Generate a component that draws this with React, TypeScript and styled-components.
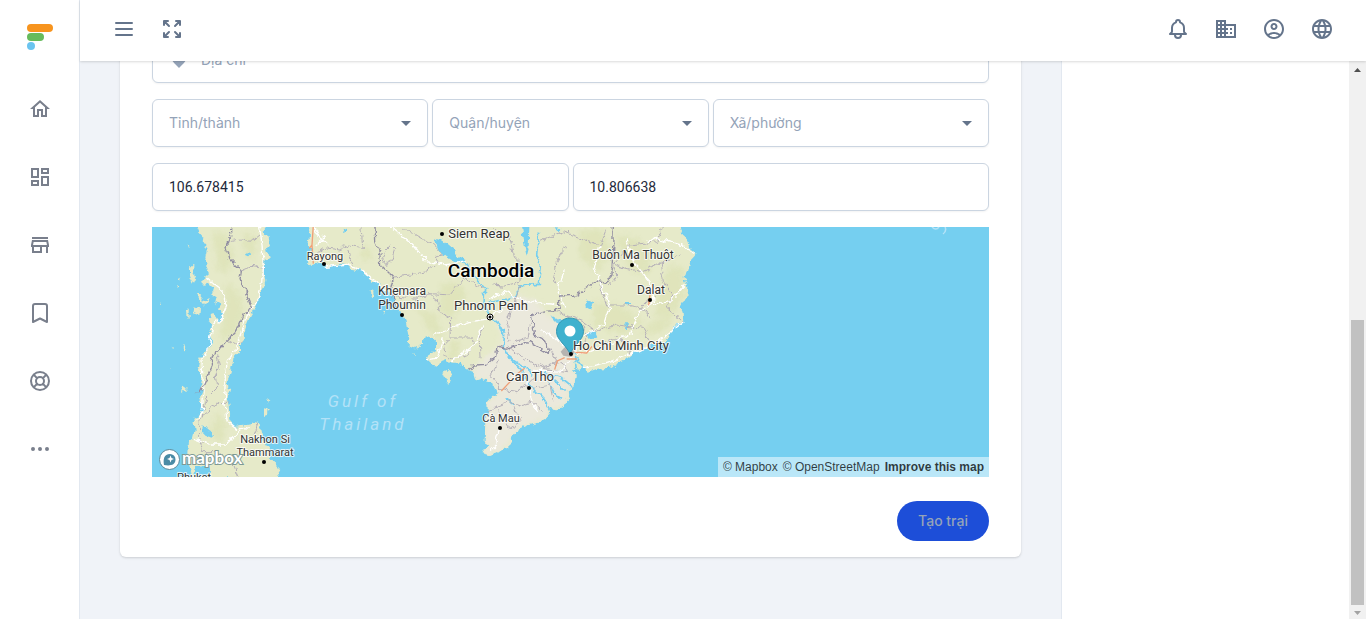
import React from "react";
import styled, { createGlobalStyle } from "styled-components";
import {
  HiOutlineArrowsExpand,
  HiOutlineBell,
  HiOutlineBookmark,
  HiOutlineDotsHorizontal,
  HiOutlineMenu,
  HiOutlineSupport,
  HiLocationMarker,
} from "react-icons/hi";
import {
  MdBusiness,
  MdLanguage,
  MdOutlineAccountCircle,
  MdOutlineDashboard,
  MdOutlineHome,
  MdOutlineStore,
} from "react-icons/md";

const GlobalStyle = createGlobalStyle`
  *, *::before, *::after { box-sizing: border-box; }
  body {
    margin: 0;
    font-family: Inter, "Noto Sans", sans-serif;
    font-size: 14px;
    color: #1e293b;
    background: #f1f5f9;
  }
  button, input, select { font: inherit; color: inherit; }
`;

const Shell = styled.div`
  display: flex;
  height: 100vh;
`;

const Sidebar = styled.aside`
  flex: none;
  width: 80px;
  background: #fff;
  border-right: 1px solid #e2e8f0;
`;

const LogoLink = styled.a`
  display: flex;
  justify-content: center;
  height: 75px;
  padding-top: 24px;
`;

const NavLink = styled.a`
  display: flex;
  align-items: center;
  justify-content: center;
  height: 68px;
  color: #797f8c;
  font-size: 24px;
`;

const Workspace = styled.div`
  flex: 1;
  min-width: 0;
  display: flex;
  flex-direction: column;
`;

const Header = styled.header`
  flex: none;
  z-index: 1;
  display: flex;
  justify-content: space-between;
  height: 61px;
  padding: 9px 24px;
  background: #fff;
  box-shadow: 0 1px 3px rgba(0, 0, 0, 0.1), 0 1px 2px rgba(0, 0, 0, 0.06);
`;

const ButtonGroup = styled.div`
  display: flex;
  gap: 8px;
`;

const IconButton = styled.button`
  display: flex;
  align-items: center;
  justify-content: center;
  width: 40px;
  height: 40px;
  padding: 0;
  border: 0;
  border-radius: 50%;
  background: none;
  color: #64748b;
  font-size: 24px;
`;

const Body = styled.div`
  flex: 1;
  min-height: 0;
  display: flex;
`;

/* Reversed column so that the view opens at the end of the form. */
const Content = styled.main`
  flex: 1;
  min-width: 0;
  display: flex;
  flex-direction: column-reverse;
  overflow-y: auto;
  scrollbar-width: none;
  padding: 0 40px;
  background: #f0f3f8;
`;

const Card = styled.form`
  flex: none;
  display: flex;
  flex-direction: column;
  gap: 16px;
  margin-bottom: 62px;
  padding: 32px 32px 16px;
  border-radius: 6px;
  background: #fff;
  box-shadow: 0 1px 3px rgba(0, 0, 0, 0.1), 0 1px 2px rgba(0, 0, 0, 0.06);
`;

const FieldRow = styled.div`
  display: flex;
  gap: 4px;
`;

const Field = styled.label`
  flex: 1 1 0;
  min-width: 0;
  display: flex;
  align-items: center;
  gap: 12px;
  height: 48px;
  padding: 0 16px;
  border: 1px solid #cbd5e1;
  border-radius: 6px;
  background: #fff;
  color: #94a3b8;
  box-shadow: 0 1px 2px rgba(0, 0, 0, 0.05);
`;

const TextInput = styled.input<{ $numeric?: boolean }>`
  flex: 1;
  min-width: 0;
  height: 18px;
  padding: 0;
  border: 0;
  outline: 0;
  background: none;
  color: #1e293b;
  font-family: ${(p) => (p.$numeric ? "Roboto" : "Inter")}, sans-serif;
  &::placeholder { color: #94a3b8; opacity: 1; }
`;

const SelectInput = styled.select`
  flex: 1;
  min-width: 0;
  padding: 0 0 2px;
  border: 0;
  outline: 0;
  appearance: none;
  background: none;
  color: #94a3b8;
`;

const MapFrame = styled.div`
  position: relative;
  height: 250px;
  overflow: hidden;
  background: #75cff0;
`;

const MapDrawing = styled.svg`
  display: block;
  width: 100%;
  height: 100%;
`;

const Attribution = styled.div`
  position: absolute;
  right: 0;
  bottom: 0;
  display: flex;
  gap: 5px;
  padding: 0 5px;
  background: rgba(255, 255, 255, 0.5);
  font: 12px/20px "Liberation Sans", Arial, sans-serif;
`;

const AttributionLink = styled.a<{ $strong?: boolean }>`
  color: rgba(0, 0, 0, 0.75);
  font-weight: ${(p) => (p.$strong ? 700 : 400)};
  text-decoration: none;
`;

const Actions = styled.div`
  display: flex;
  justify-content: flex-end;
  padding-top: 8px;
`;

const SubmitButton = styled.button`
  min-width: 92px;
  height: 40px;
  padding: 0 20px 2px;
  border: 0;
  border-radius: 20px;
  background: #1d4ed8;
  color: #94a3b8;
  font-weight: 500;
`;

const SidePanel = styled.aside`
  flex: none;
  width: 288px;
  border-left: 1px solid #e2e8f0;
  background: #fff;
`;

const ScrollTrack = styled.div`
  flex: none;
  display: flex;
  flex-direction: column;
  align-items: center;
  width: 17px;
  padding: 7px 0 4px;
  background: #f1f1f1;
`;

const ScrollThumb = styled.div`
  width: 13px;
  height: 285px;
  margin: auto 0 6px;
  background: #c1c1c1;
`;

const Logo = () => (
  <svg width="26" height="26" viewBox="0 0 26 26" aria-hidden="true">
    <rect width="26" height="8" rx="4" fill="#f7941e" />
    <rect y="9" width="17" height="8" rx="4" fill="#66bb5c" />
    <circle cx="4" cy="22" r="4" fill="#6bc4f0" />
  </svg>
);

const Caret = () => (
  <svg width="10" height="5" viewBox="0 0 10 5" aria-hidden="true">
    <path d="M0 0h10L5 5z" fill="#64748b" />
  </svg>
);

const ScrollArrow = ({ up }: { up?: boolean }) => (
  <svg width="7" height="4" viewBox="0 0 7 4" aria-hidden="true">
    <path d={up ? "M0 4 3.5 0 7 4z" : "M0 0 3.5 4 7 0z"} fill={up ? "#505050" : "#a3a3a3"} />
  </svg>
);

const PENINSULA =
  "M140 0L150 25 160 36 158 55 170 72 166 95 172 112 172 130 180 145 165 158 150 170 160 182 178 178 190 190 186 205 200 214 196 230 214 240 204 256 218 270 206 288 190 264 180 268 177 285 186 300 180 325 187 345 178 372 160 382 162 396 144 398 150 412 146 430 156 448 150 480 158 500 150 520 160 550 146 570 130 582 134 615 128 640 114 650 112 690 116 715 128 760 L390 760 384 730 374 712 360 702 362 680 346 660 338 640 332 618 330 592 310 588 298 598 276 602 250 606 238 580 236 540 230 520 238 490 236 465 246 440 240 425 248 420 250 400 270 380 270 365 280 355 282 325 290 300 302 270 318 245 328 215 342 190 346 165 340 140 344 105 356 98 348 70 360 50 355 36 338 24 346 0Z";

const MAINLAND =
  "M472 0L480 30 474 60 484 74 478 95 468 112 478 124 496 116 520 124 548 122 570 114 592 118 600 132 622 136 632 130 642 146 660 158 664 170 688 178 700 196 722 200 730 220 738 242 750 262 768 280 772 300 778 330 776 365 796 370 818 360 820 338 842 332 858 350 858 376 838 388 830 404 842 416 862 424 872 408 888 402 902 416 930 416 950 434 970 440 978 466 1000 462 1020 470 1034 480 1046 504 1024 516 1012 530 1014 560 1006 590 1004 650 1018 658 1004 672 996 684 1020 690 1044 680 1052 674 1072 664 1086 652 1082 640 1104 616 1130 602 1162 594 1184 582 1200 564 1196 552 1216 556 1240 548 1246 528 1258 516 1256 496 1270 488 1274 450 1266 432 1290 434 1304 428 1316 440 1340 432 1380 428 1408 412 1432 400 1452 384 1478 372 1510 360 1550 350 1560 330 1576 304 1600 290 1598 262 1592 248 1608 220 1612 190 1604 160 1612 130 1618 110 1640 86 1620 70 1614 40 1596 24 1590 0Z";

const DELTA =
  "M965 436L1000 400 1040 372 1060 330 1030 280 1060 240 1110 210 1160 230 1190 270 1240 300 1270 350 1275 400 1268 432 1274 450 1270 488 1256 496 1258 516 1246 528 1240 548 1196 552 1200 564 1184 582 1130 602 1104 616 1082 640 1086 652 1044 680 1020 690 996 684 1018 658 1004 650 1006 590 1014 560 1012 530 1046 504 1034 480 1000 462 978 466Z";

const HILLS = [
  "M190 20l40 10 20 60-20 60-30-20zM230 170l40 40 10 60-30 60-40 20 10-80zM280 20l40 20-10 70-30-40zM200 560l30 40-20 60-30-40z",
  "M640 60l24 20-8 30-24-14zM870 180l50-10 30 40-40 70-40-20zM800 250l60 20 20 80-40-30zM900 350l30 0-6 50-30 0zM1290 20l60-10 40 70-50 60-50-40z",
  "M1560 120l40 10 4 80-40 60-50 10 10-70zM1400 30l60 10 50 50-20 60-40-10-40-50zM1330 230l80 10 70 50-60 40-90-30zM1460 330l50-40 60-20-30 50z",
];

const WATER = [
  "M852 40L880 48 918 80 930 100 946 104 940 118 916 112 890 96 866 76Z",
  "M158 604l12 4 16 14 6 14-18-4-18-8zM286 88l12-10 2 16zM1116 6l22 2-2 60 -6 24-6-30zM1310 226l20 8-10 18-14-8zM1204 276l30 10 20 26-20-4zM1308 324l26-8 8 18-22 6zM1420 234h20v10h-14zM1424 298h10v14h-8zM1210 6l24 2-6 12z",
  "M574 12l14-4 2 12-12 4zM840 345l16 10 2 24-16 6-6-20zM138 722l40-2 4 36-50 0z",
];

const RIVERS =
  "M946 112L970 150 1004 190 1002 240 1030 285 1048 300 1064 330 1060 366M1166 20L1160 90 1174 120 1168 178 1110 182 1096 214 1074 222 1016 232M1060 366L1080 400 1110 430 1140 480 1180 520 1204 556M1064 380L1096 408 1130 430 1146 448M1070 520l20 16M1180 440L1220 470 1250 500M1206 452l30 10 30 24M1196 470L1214 508 1236 520M1272 380l8 60M1280 400l26 34";

const ISLANDS =
  "M120 124h10v20l8 10-10 22-8-20zM108 254l8 0 0 26-6 6zM134 244l16 6-2 20-18-6zM96 362l8-2 4 14-6 2zM98 490l12-4-2 10-12 8zM348 522l10 8-4 6zM342 552l14 4-2 14-12 4zM662 196l10 4 2 14-8 6zM696 262l8-4 0 8zM880 440l16-8 10 16-8 36-10-24-12-8zM786 386l10 6 2 6-6-4zM86 160l6 2-2 10zM80 180l10 4-4 4zM110 54l8 6-4 6zM140 206l12 2 10 12-8 6zM150 226l14 6 14-10 2 12-18 8zM760 300v16M1248 670l5 0 0 4zM30 230h3v3h-3zM62 428h3v3h-3zM64 366l10-2 0 4z";

const MINOR_BORDERS =
  "M238 50L280 44 310 46 330 30M276 134L300 124 345 130M236 350L250 358 280 354M200 388L208 420 196 450 200 490 170 520 162 550M236 532L200 532 180 544 178 560 150 580 148 640 160 660 154 680 200 680 250 720 264 756M316 590l4 20-8 20M500 86L530 66 570 72 600 60 640 70 632 6M594 72L600 104 610 120M704 80l20-22 10 10-8 40-20 10-8-20zM732 156L780 150 830 140 856 120 860 96 880 90 850 60 760 10M730 212L800 220 840 206 866 230 870 260 902 280 900 340 880 360 884 380M880 390l30 10 40-10 20-30-4-24-60 0M840 206L900 210 940 160 1000 190M1000 310L988 340 990 400M1030 180L1060 184 1110 170 1110 110 1090 90 1080 40 1030 10M1170 50L1240 20 1350 60 1370 10M1220 178L1210 130 1250 60M1380 180L1400 150 1390 120 1440 60 1520 50 1540 6M1350 180L1370 240 1430 240 1480 250 1500 280M1390 120L1470 140 1540 110 1590 90M1530 110L1540 170 1570 210 1550 250 1600 290M1470 250L1530 200M1220 260L1250 270 1300 290 1310 340 1290 370M1300 290L1340 320 1400 300 1480 310 1500 350M1340 370L1390 340 1430 350 1440 390M1110 180L1070 300 1080 350M1140 290L1130 340 1090 350M1080 370L1120 400 1180 430 1220 410 1200 370M1050 400L1020 450 1050 490 1100 500 1130 480 1160 450M1030 550L1080 530 1110 540 1150 530 1180 560M1090 540L1110 590 1080 610 1040 550 1010 556M1150 490L1200 480 1210 530M1176 430l80 10-20-30-60 16";

const COUNTRY_BORDERS =
  "M242 0L242 40 228 66 238 100 274 136 270 160 280 190 290 200 304 240 298 260 280 268 262 310 240 340 212 370 188 390 184 410 188 420 152 500 140 500M672 0L674 50 690 90 692 120 730 156 722 190 730 220 738 250M958 436L972 420 1010 418 1040 392 1044 364 1070 370 1120 356 1138 350 1170 370 1192 382 1194 368 1180 344 1154 330 1144 270 1190 256 1230 252 1228 216 1270 214 1324 180 1340 168 1370 176 1386 150 1390 0";

const ROADS =
  "M328 0L336 60 340 130 338 170 322 230 290 270 270 330 262 360 232 410 226 450 224 530 232 590 256 610 300 612M172 160L210 190 230 240 214 280 190 300 180 350 176 376 156 400 158 450 162 500 156 560 138 590M132 640L180 660 230 660 256 630 278 610M490 0L510 40 530 60M494 60L530 30M500 100L530 124 590 118 640 140 720 210M850 330L900 310 960 290 1004 284 1060 250M720 0L790 60 830 110 880 120 950 110M880 340L860 400 830 404M900 412L960 370 980 350 1000 300M1020 220L1060 200 1130 230 1230 240M1350 60L1330 130 1380 240 1360 300 1290 340 1272 384M1430 40L1450 110 1500 170 1510 230 1470 260 1440 330 1340 370 1280 390M1490 50L1520 40 1590 60 1636 84M1510 240L1560 230 1606 180M1600 290L1540 340 1460 380 1380 410 1300 428M1150 436L1230 438 1266 400M1180 320L1220 340 1264 384M1240 130L1224 200 1250 250M1160 560L1140 510 1130 450M1050 610L1040 640 1036 664 1020 680";

const HIGHWAYS =
  "M490 0L486 60 478 70M486 60L490 116M1054 498L1084 466M1100 448L1124 430M1214 434L1222 408 1244 398M1276 382L1310 384 1326 364M1500 210L1496 234M1494 240L1500 232M1250 402l30 0";

type Place = { name: string; x: number; y: number; size: number; dot?: [number, number] };

const PLACES: Place[] = [
  { name: "Siem Reap", x: 327, y: 11, size: 13, dot: [290, 7] },
  { name: "Rayong", x: 173, y: 33, size: 11, dot: [172, 37] },
  { name: "Khemara", x: 250, y: 68, size: 12 },
  { name: "Phoumin", x: 250, y: 82, size: 12, dot: [250, 88] },
  { name: "Phnom Penh", x: 339, y: 83, size: 13 },
  { name: "Buôn Ma Thuột", x: 481, y: 32, size: 12, dot: [480, 38] },
  { name: "Dalat", x: 499, y: 67, size: 12, dot: [498, 73] },
  { name: "Ho Chi Minh City", x: 469, y: 123, size: 13, dot: [419, 127] },
  { name: "Can Tho", x: 378, y: 154, size: 13, dot: [377, 161] },
  { name: "Cà Mau", x: 349, y: 195, size: 11, dot: [348, 201] },
  { name: "Nakhon Si", x: 113, y: 216, size: 11 },
  { name: "Thammarat", x: 113, y: 229, size: 11, dot: [112, 235] },
  { name: "Phuket", x: 42, y: 254, size: 11 },
];

const RegionMap = () => (
  <MapDrawing viewBox="0 0 837 250" preserveAspectRatio="xMidYMid slice" role="img" aria-label="Map">
    <defs>
      {/* Roughens coastlines, rivers and borders. */}
      <filter id="rough" filterUnits="userSpaceOnUse" x="0" y="0" width="837" height="250">
        <feTurbulence type="fractalNoise" baseFrequency="0.15" numOctaves="3" seed="4" />
        <feDisplacementMap in="SourceGraphic" scale="7" xChannelSelector="R" yChannelSelector="G" />
      </filter>
      <filter id="soft" x="-20%" y="-20%" width="140%" height="140%">
        <feGaussianBlur stdDeviation="8" />
      </filter>
      <clipPath id="land">
        <path d={MAINLAND} />
        <path d={PENINSULA} />
      </clipPath>
    </defs>
    <g filter="url(#rough)">
      <g transform="scale(0.33333) translate(-6 -6)" fill="none" strokeLinejoin="round">
        <path d={PENINSULA} fill="#e6eac9" />
        <path d={MAINLAND} fill="#e6eac9" />
        <path d={ISLANDS} fill="#e6eac9" />
        <g clipPath="url(#land)">
          <path d={DELTA} fill="#ebe9dc" filter="url(#soft)" />
          {HILLS.map((d) => (
            <path key={d} d={d} fill="#d6dda8" opacity="0.4" filter="url(#soft)" />
          ))}
        </g>
        {WATER.map((d) => (
          <path key={d} d={d} fill="#75cff0" />
        ))}
        <path d={RIVERS} stroke="#75cff0" strokeWidth="5" />
        <path d={MINOR_BORDERS} stroke="#b5b0b8" strokeWidth="3" />
        <path d={ROADS} stroke="#fff" strokeWidth="4" />
        <path d={COUNTRY_BORDERS} stroke="#918da1" strokeWidth="4" />
      </g>
    </g>
    <g transform="scale(0.33333) translate(-6 -6)" fill="none">
      <path d={HIGHWAYS} stroke="#f0a078" strokeWidth="4" />
      <path d="M1232 380l16-18 16-2 10 22-10 14-24-4z" fill="#a9a5a5" opacity="0.8" />
    </g>
    <path
      d="M418 91c-7.500 0-13.500 6-13.500 13.500 0 8 8 12 13.500 22 5.500-10 13.500-14 13.500-22C431.500 97 425.500 91 418 91z"
      fill="#3fb1ce"
      stroke="#3598b3"
    />
    <circle cx="418" cy="104" r="5.500" fill="#fff" />
    <g
      fontFamily="Roboto, sans-serif"
      textAnchor="middle"
      fill="#333"
      stroke="#fff"
      strokeOpacity="0.75"
      strokeWidth="2"
      strokeLinejoin="round"
      paintOrder="stroke"
    >
      {PLACES.map((p) => (
        <text key={p.name} x={p.x} y={p.y} fontSize={p.size}>
          {p.name}
        </text>
      ))}
      <text x="339" y="50" fontSize="19" fontWeight="500" fill="#000">
        Cambodia
      </text>
    </g>
    {PLACES.map((p) => p.dot && <circle key={p.name} cx={p.dot[0]} cy={p.dot[1]} r="2" />)}
    <circle cx="338" cy="90" r="3" fill="#fff" stroke="#000" />
    <circle cx="338" cy="90" r="1.5" />
    <g
      fontFamily="Roboto, sans-serif"
      fontSize="17"
      fontStyle="italic"
      fill="#b3e2f7"
      textAnchor="middle"
      letterSpacing="3"
    >
      <text x="211" y="180">Gulf of</text>
      <text x="211" y="203">Thailand</text>
    </g>
    <path d="M780 0q4 4 7 0M793 0q2 4-2 7" fill="none" stroke="#b3e2f7" strokeWidth="1.5" />
    <g>
      <circle cx="17.500" cy="232.500" r="10" fill="#fff" stroke="#5d8897" />
      <path d="M12 238c-1-6 0-11 6-11a5.500 5.500 0 0 1 5.500 5.500c0 6-6 6.500-11.500 5.500z" fill="#4b8ba5" />
      <path d="M18.500 228.500l1 2.500 2.500 1-2.500 1-1 2.500-1-2.500-2.500-1 2.500-1z" fill="#fff" />
      <text
        x="30"
        y="237"
        fontFamily="Lato, sans-serif"
        fontSize="17"
        fontWeight="700"
        fill="#fff"
        stroke="#7f9a95"
        strokeWidth="2"
        paintOrder="stroke"
      >
        mapbox
      </text>
    </g>
  </MapDrawing>
);

const NAV_ITEMS = [
  { label: "Home", icon: MdOutlineHome },
  { label: "Dashboard", icon: MdOutlineDashboard },
  { label: "Store", icon: MdOutlineStore },
  { label: "Bookmarks", icon: HiOutlineBookmark },
  { label: "Support", icon: HiOutlineSupport },
  { label: "More", icon: HiOutlineDotsHorizontal },
];

const VIEW_ACTIONS = [
  { label: "Menu", icon: HiOutlineMenu },
  { label: "Fullscreen", icon: HiOutlineArrowsExpand },
];

const USER_ACTIONS = [
  { label: "Notifications", icon: HiOutlineBell },
  { label: "Company", icon: MdBusiness },
  { label: "Account", icon: MdOutlineAccountCircle },
  { label: "Language", icon: MdLanguage },
];

const REGIONS = ["Tỉnh/thành", "Quận/huyện", "Xã/phường"];

export default function App() {
  return (
    <>
      <GlobalStyle />
      <Shell>
        <Sidebar>
          <LogoLink href="#" aria-label="Logo">
            <Logo />
          </LogoLink>
          <nav>
            {NAV_ITEMS.map(({ label, icon: Icon }) => (
              <NavLink key={label} href="#" aria-label={label}>
                <Icon />
              </NavLink>
            ))}
          </nav>
        </Sidebar>
        <Workspace>
          <Header>
            <ButtonGroup>
              {VIEW_ACTIONS.map(({ label, icon: Icon }) => (
                <IconButton key={label} type="button" aria-label={label}>
                  <Icon />
                </IconButton>
              ))}
            </ButtonGroup>
            <ButtonGroup>
              {USER_ACTIONS.map(({ label, icon: Icon }) => (
                <IconButton key={label} type="button" aria-label={label}>
                  <Icon />
                </IconButton>
              ))}
            </ButtonGroup>
          </Header>
          <Body>
            <Content>
              <Card>
                <FieldRow>
                  <Field>
                    <HiLocationMarker size={20} />
                    <TextInput placeholder="Địa chỉ" aria-label="Địa chỉ" />
                  </Field>
                </FieldRow>
                <FieldRow>
                  {REGIONS.map((region) => (
                    <Field key={region}>
                      <SelectInput aria-label={region} defaultValue="">
                        <option value="">{region}</option>
                      </SelectInput>
                      <Caret />
                    </Field>
                  ))}
                </FieldRow>
                <FieldRow>
                  <Field>
                    <TextInput $numeric aria-label="Longitude" defaultValue="106.678415" />
                  </Field>
                  <Field>
                    <TextInput $numeric aria-label="Latitude" defaultValue="10.806638" />
                  </Field>
                </FieldRow>
                <MapFrame>
                  <RegionMap />
                  <Attribution>
                    <AttributionLink href="#">© Mapbox</AttributionLink>
                    <AttributionLink href="#">© OpenStreetMap</AttributionLink>
                    <AttributionLink href="#" $strong>
                      Improve this map
                    </AttributionLink>
                  </Attribution>
                </MapFrame>
                <Actions>
                  <SubmitButton type="submit" disabled>
                    Tạo trại
                  </SubmitButton>
                </Actions>
              </Card>
            </Content>
            <SidePanel />
            <ScrollTrack>
              <ScrollArrow up />
              <ScrollThumb />
              <ScrollArrow />
            </ScrollTrack>
          </Body>
        </Workspace>
      </Shell>
    </>
  );
}
